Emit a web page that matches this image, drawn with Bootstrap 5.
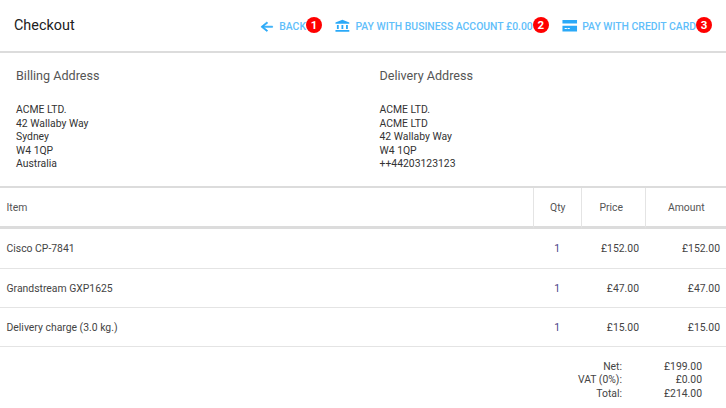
<!DOCTYPE html>
<html lang="en"><head><meta charset="utf-8">
<title>Checkout</title>
<link href="https://cdn.jsdelivr.net/npm/bootstrap@5.3.0/dist/css/bootstrap.min.css" rel="stylesheet">
<style>
html,body{height:408px;overflow:hidden;background:#fff}
body{font-family:Roboto,"Liberation Sans",sans-serif;font-size:10.4px;color:#333;line-height:13.5px}
.topbar{height:53px;border-bottom:2px solid #dcdcdc;padding:0 14px}
.topbar h1{font-size:14.4px;font-weight:400;color:#212121;margin:0;line-height:20px;padding-top:1px}
.act{color:#45b4fa;font-size:10.4px;font-weight:500;text-decoration:none;line-height:20px;margin-left:12px}
.act svg{width:17.5px;height:17.5px;fill:#2aa9f8;flex:none;margin-right:4px}
.act svg .heavy{stroke:#2aa9f8;stroke-width:1}
.act .t{opacity:.85;padding-top:2px}
.num{width:16px;height:16px;border-radius:50%;background:#f00;color:#fff;font-size:11.5px;font-weight:700;line-height:16px;text-align:center;flex:none;margin-top:-1px}
.addr{height:133px;padding:16px 16px 0}
.addr h2{font-size:12.6px;font-weight:400;color:#555;margin:0 0 20px;line-height:14px}
.addr .c{width:363.5px;flex:none}
.addr p{margin:0;color:#333}
table.inv{width:100%;border-collapse:separate;border-spacing:0;table-layout:fixed;margin:0;border-top:2px solid #dcdcdc}
table.inv th{font-weight:400;height:41px;padding:1px 6px 0 6.5px;color:#555;border-bottom:3px solid #dcdcdc;vertical-align:middle}
table.inv th+th{border-left:1px solid #e4e4e4;text-align:center}
table.inv th:nth-child(3){padding-right:11px}
table.inv td{height:39px;padding:1px 6px 0 6.5px;border-bottom:1px solid #e4e4e4;vertical-align:middle;color:#444}
table.inv tr:first-child td{height:40px}
.q{color:#4a3f86!important;text-align:center}
.r{text-align:right}
.tot{padding:12.5px 24px 0 0;color:#444}
.tot div{display:flex;justify-content:flex-end}
.tot b{font-weight:400;width:100px;text-align:right}
.tot span{width:80px;text-align:right}
</style></head>
<body>
<div class="topbar d-flex align-items-center justify-content-between">
<h1>Checkout</h1>
<div class="d-flex align-items-center">
<a class="act d-flex align-items-center" href="#"><svg viewBox="0 0 24 24"><g transform="translate(0 3.8) scale(1 .8)"><path class="heavy" d="M20 11H7.83l5.59-5.59L12 4l-8 8 8 8 1.41-1.41L7.83 13H20v-2z"/></g></svg><span class="t">BACK</span><span class="num">1</span></a>
<a class="act d-flex align-items-center" href="#"><svg viewBox="0 0 24 24"><g transform="translate(0 3.03) scale(1 .78)"><path d="M4 10v7h2.500v-7H4zm6.250 0v7h2.500v-7h-2.500zM2 22h19v-3H2v3zm14.500-12v7H19v-7h-2.500zm-5-9L2 6v2h19V6l-9.500-5z"/></g></svg><span class="t">PAY WITH BUSINESS ACCOUNT £0.00</span><span class="num">2</span></a>
<a class="act d-flex align-items-center" href="#"><svg viewBox="0 0 24 24"><path fill-rule="evenodd" d="M2 4h20v16H2zM2 9v3h20V9zM5 15v1.500h3V15zM9 15v1.500h3V15z"/></svg><span class="t">PAY WITH CREDIT CARD</span><span class="num">3</span></a>
</div>
</div>
<div class="addr d-flex">
<div class="c"><h2>Billing Address</h2><p>ACME LTD.<br>42 Wallaby Way<br>Sydney<br>W4 1QP<br>Australia</p></div>
<div class="c"><h2>Delivery Address</h2><p>ACME LTD.<br>ACME LTD<br>42 Wallaby Way<br>W4 1QP<br>++44203123123</p></div>
</div>
<table class="inv">
<colgroup><col><col style="width:48px"><col style="width:64px"><col style="width:81px"></colgroup>
<thead><tr><th>Item</th><th>Qty</th><th>Price</th><th>Amount</th></tr></thead>
<tbody>
<tr><td>Cisco CP-7841</td><td class="q">1</td><td class="r">£152.00</td><td class="r">£152.00</td></tr>
<tr><td>Grandstream GXP1625</td><td class="q">1</td><td class="r">£47.00</td><td class="r">£47.00</td></tr>
<tr><td>Delivery charge (3.0 kg.)</td><td class="q">1</td><td class="r">£15.00</td><td class="r">£15.00</td></tr>
</tbody></table>
<div class="tot">
<div><b>Net:</b><span>£199.00</span></div>
<div><b>VAT (0%):</b><span>£0.00</span></div>
<div><b>Total:</b><span>£214.00</span></div>
</div>
<script src="https://cdn.jsdelivr.net/npm/bootstrap@5.3.0/dist/js/bootstrap.bundle.min.js"></script>
</body></html>
